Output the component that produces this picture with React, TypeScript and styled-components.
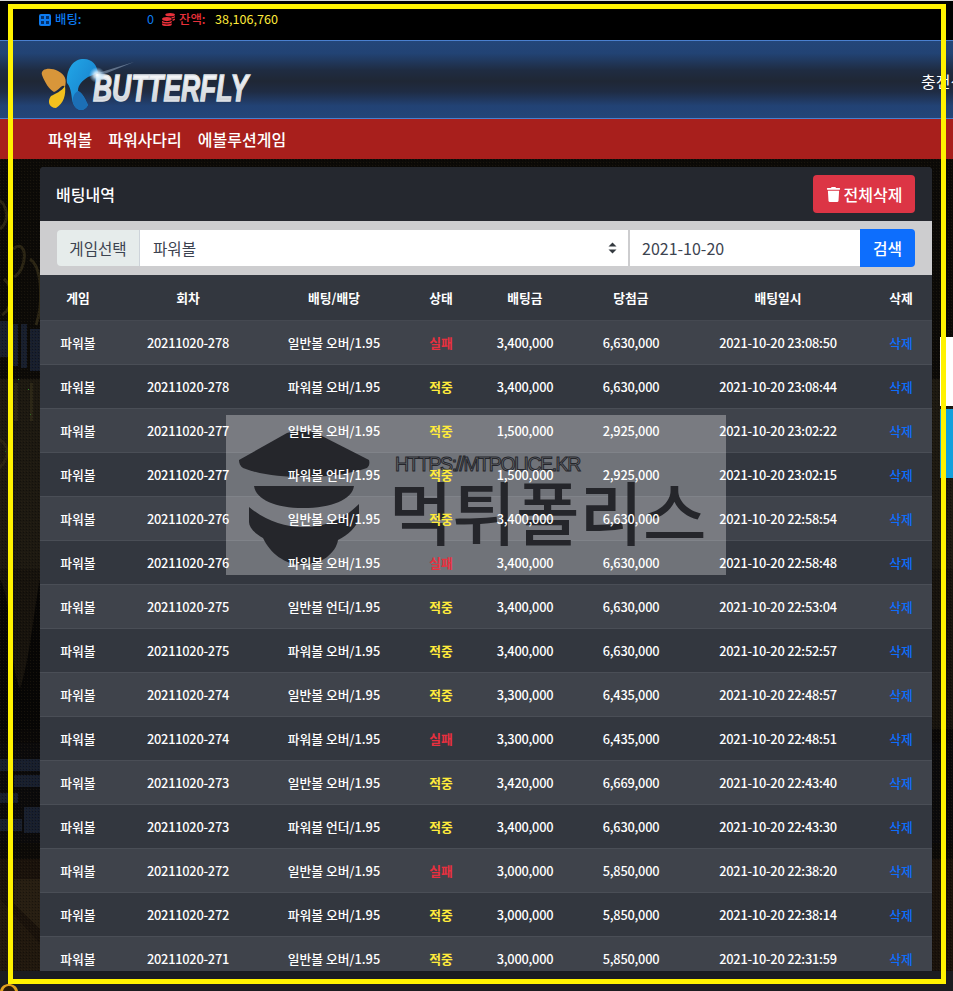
import React from "react";
import styled, { createGlobalStyle } from "styled-components";
import { FaTrash, FaCoins } from "react-icons/fa";

const KR = `"Noto Sans CJK KR", "Noto Sans", sans-serif`;

const Global = createGlobalStyle`
  html, body { margin: 0; padding: 0; background: #000; }
  * { box-sizing: border-box; }
  body { font-family: ${KR}; }
`;

const Page = styled.div`
  position: relative;
  width: 953px;
  height: 991px;
  overflow: hidden;
  display: grid;
  grid-template-rows: 40px 79px 40px 1fr 20px;
  background: #0d0b08;
`;

const TopBar = styled.div`
  position: relative;
  background: #000;
  border-top: 1px solid #d8d8d8;
  padding: 0 0 2px 39px;
  display: flex;
  align-items: center;
  font-size: 12.4px;
  font-weight: 500;
  line-height: 1;
  height: 40px;
`;

const Stat = styled.span<{ $color: string; $width?: number }>`
  color: ${(p) => p.$color};
  display: inline-flex;
  align-items: center;
  gap: 4px;
  white-space: nowrap;
  ${(p) => (p.$width ? `width: ${p.$width}px;` : "")}
`;

const Amount = styled(Stat)`
  font-weight: 400;
  font-size: 12.6px;
`;

const HeaderBar = styled.header`
  position: relative;
  background: linear-gradient(180deg, #234679 0%, #224374 16%, #1f2c42 38%, #1f2735 52%, #1f2c44 66%, #224274 84%, #234679 100%);
  border-top: 1px solid #4a80cf;
  border-bottom: 1px solid #4a80cf;
  display: grid;
  grid-template-columns: 881px max-content;
  align-items: center;
  padding-left: 40px;
`;

const LogoSvg = styled.svg`
  display: block;
  width: 210px;
  height: 60px;
  margin-top: 6px;
  overflow: visible;
`;

const HeadMenu = styled.div`
  color: #fff;
  font-size: 16px;
  white-space: nowrap;
  padding-top: 3px;
`;

const RedNav = styled.nav`
  position: relative;
  background: #a81f1c;
  display: flex;
  align-items: center;
  gap: 16px;
  padding-left: 48px;
  color: #fff;
  font-size: 16px;
  font-weight: 500;
  line-height: 1;
`;

const Main = styled.main`
  position: relative;
  padding: 8px 21px 0 40px;
  overflow: hidden;
  min-height: 0;
`;

const Panel = styled.section`
  width: 892px;
  height: 804px;
  overflow: hidden;
  border-radius: 4px 4px 0 0;
  background: #33373f;
`;

const PanelHead = styled.div`
  height: 54px;
  background: #25282f;
  display: flex;
  align-items: center;
  justify-content: space-between;
  padding: 0 17px 0 16px;
`;

const PanelTitle = styled.h2`
  margin: 0;
  color: #fff;
  font-size: 16px;
  font-weight: 500;
`;

const DangerBtn = styled.button`
  height: 38px;
  width: 102px;
  border: 0;
  border-radius: 4px;
  background: #dc3545;
  color: #fff;
  font: 500 16px ${KR};
  display: flex;
  align-items: center;
  justify-content: center;
  gap: 3px;
  padding: 0;
`;

const FilterBar = styled.form`
  height: 54px;
  margin: 0;
  background: #cdcdcf;
  padding: 8px 17px 0;
  display: flex;
  align-items: flex-start;
`;

const FilterLabel = styled.span`
  width: 83px;
  height: 36px;
  margin-top: 1px;
  background: #e6eceb;
  border-radius: 4px 0 0 4px;
  border-right: 1px solid #ced4da;
  color: #3c4350;
  font-size: 15.6px;
  display: flex;
  align-items: center;
  justify-content: center;
`;

const SelectWrap = styled.div`
  position: relative;
  width: 488px;
  height: 36px;
  margin-top: 1px;
  background: #fff;
  color: #3c4350;
  font-size: 15.6px;
  display: flex;
  align-items: center;
  padding-left: 13px;
`;

const SelectArrows = styled.svg`
  position: absolute;
  right: 11px;
  top: 12px;
  width: 9px;
  height: 12px;
`;

const DateInput = styled.input`
  width: 230px;
  height: 36px;
  margin: 1px 0 0 2px;
  padding: 0 12px;
  border: 0;
  outline: 0;
  background: #fff;
  color: #3c4350;
  font: 400 16px ${KR};
`;

const SearchBtn = styled.button`
  width: 55px;
  height: 38px;
  border: 0;
  padding: 0;
  border-radius: 0 4px 4px 0;
  background: #0d6efd;
  color: #fff;
  font: 500 15.8px ${KR};
`;

const Table = styled.table`
  width: 892px;
  table-layout: fixed;
  border-collapse: collapse;
  color: #fff;
  font-size: 12.8px;
`;

const HeadCell = styled.th`
  position: relative;
  z-index: 3;
  height: 45px;
  padding: 0;
  background: #33373f;
  border-bottom: 1px solid #454951;
  font-weight: 700;
  font-size: 12.8px;
  text-align: center;
`;

const Row = styled.tr<{ $odd: boolean }>`
  background: ${(p) => (p.$odd ? "#3f434b" : "#33373f")};
`;

const Cell = styled.td`
  position: relative;
  z-index: 3;
  height: 44px;
  padding: 0;
  border-bottom: 1px solid #4a4e56;
  font-weight: 500;
  text-align: center;
  white-space: nowrap;
`;

const NumCell = styled(Cell)`
  letter-spacing: -0.22px;
`;

const StatusCell = styled(Cell)<{ $win: boolean }>`
  color: ${(p) => (p.$win ? "#ffeb3b" : "#e8303f")};
  font-weight: 700;
`;

const DeleteCell = styled(Cell)`
  color: #0d6efd;
`;

const FootStrip = styled.div`
  position: relative;
  background: #1b1c20;
`;

const Backdrop = styled.svg`
  position: absolute;
  left: 0;
  top: 159px;
  width: 953px;
  height: 812px;
  pointer-events: none;
`;

const Frame = styled.div`
  position: absolute;
  left: 8px;
  top: 4px;
  width: 938px;
  height: 980px;
  border: 5px solid #fff200;
  pointer-events: none;
  z-index: 5;
`;

const SideTab = styled.div<{ $color: string; $top: number; $height: number }>`
  position: absolute;
  left: 940px;
  width: 13px;
  top: ${(p) => p.$top}px;
  height: ${(p) => p.$height}px;
  background: ${(p) => p.$color};
  z-index: 1;
`;

const Badge = styled.svg`
  position: absolute;
  left: 0;
  top: 984px;
  width: 18px;
  height: 7px;
  z-index: 6;
`;

const Watermark = styled.aside`
  position: absolute;
  left: 226px;
  top: 415px;
  width: 500px;
  height: 160px;
  background: rgba(255, 255, 255, 0.3);
  z-index: 2;
  display: flex;
  pointer-events: none;
`;

const Hat = styled.svg`
  width: 157px;
  height: 160px;
  flex: none;
`;

const WmText = styled.div`
  padding: 37px 0 0 12px;
  color: #25262b;
  display: flex;
  flex-direction: column;
`;

const WmUrl = styled.span`
  font: 400 19.5px "Liberation Sans", sans-serif;
  line-height: 24px;
  letter-spacing: -1.45px;
  color: #6f7277;
  -webkit-text-stroke: 1px #25262b;
`;

const WmName = styled.span`
  font: 500 69px ${KR};
  line-height: 76px;
  margin: -4px 0 0 -6px;
  white-space: nowrap;
`;

const COLS = [76, 144, 148, 66, 102, 110, 184, 62];
const HEADS = ["게임", "회차", "배팅/배당", "상태", "배팅금", "당첨금", "배팅일시", "삭제"];

type Bet = [string, string, boolean, string, string, string];
const BETS: Bet[] = [
  ["20211020-278", "일반볼 오버/1.95", false, "3,400,000", "6,630,000", "2021-10-20 23:08:50"],
  ["20211020-278", "파워볼 오버/1.95", true, "3,400,000", "6,630,000", "2021-10-20 23:08:44"],
  ["20211020-277", "일반볼 오버/1.95", true, "1,500,000", "2,925,000", "2021-10-20 23:02:22"],
  ["20211020-277", "파워볼 언더/1.95", true, "1,500,000", "2,925,000", "2021-10-20 23:02:15"],
  ["20211020-276", "일반볼 오버/1.95", true, "3,400,000", "6,630,000", "2021-10-20 22:58:54"],
  ["20211020-276", "파워볼 오버/1.95", false, "3,400,000", "6,630,000", "2021-10-20 22:58:48"],
  ["20211020-275", "일반볼 언더/1.95", true, "3,400,000", "6,630,000", "2021-10-20 22:53:04"],
  ["20211020-275", "파워볼 오버/1.95", true, "3,400,000", "6,630,000", "2021-10-20 22:52:57"],
  ["20211020-274", "일반볼 오버/1.95", true, "3,300,000", "6,435,000", "2021-10-20 22:48:57"],
  ["20211020-274", "파워볼 오버/1.95", false, "3,300,000", "6,435,000", "2021-10-20 22:48:51"],
  ["20211020-273", "일반볼 오버/1.95", true, "3,420,000", "6,669,000", "2021-10-20 22:43:40"],
  ["20211020-273", "파워볼 언더/1.95", true, "3,400,000", "6,630,000", "2021-10-20 22:43:30"],
  ["20211020-272", "일반볼 오버/1.95", false, "3,000,000", "5,850,000", "2021-10-20 22:38:20"],
  ["20211020-272", "파워볼 오버/1.95", true, "3,000,000", "5,850,000", "2021-10-20 22:38:14"],
  ["20211020-271", "일반볼 오버/1.95", true, "3,000,000", "5,850,000", "2021-10-20 22:31:59"],
];

function Logo() {
  return (
    <LogoSvg viewBox="0 0 210 60">
      <defs>
        <linearGradient id="wingBlue" x1="0" y1="0" x2="1" y2="1">
          <stop offset="0" stopColor="#22a7e8" />
          <stop offset="1" stopColor="#1577c4" />
        </linearGradient>
        <linearGradient id="letters" x1="0" y1="0" x2="0" y2="1">
          <stop offset="0" stopColor="#ffffff" />
          <stop offset="1" stopColor="#c4c8cf" />
        </linearGradient>
        <radialGradient id="flare">
          <stop offset="0" stopColor="#ffffff" />
          <stop offset="0.4" stopColor="#d8f0ff" stopOpacity="0.8" />
          <stop offset="1" stopColor="#8fd0ff" stopOpacity="0" />
        </radialGradient>
      </defs>
      <path d="M2 22C0 15 11 14 18 18C25 22 27 26 25 34C22 30 20 37 14 39C9 36 5 30 2 22Z" fill="#d8963a" />
      <path d="M25 33C26 42 24 50 16 55C9 55 7 48 11 43C15 41 22 38 25 33Z" fill="#f2c01e" />
      <path d="M42 6C52 5 57 12 58 20L48 24C42 28 38 32 38 38C43 40 46 48 48 52C44 60 36 58 33 50C31 44 32 36 27 30C26 18 32 7 42 6Z" fill="url(#wingBlue)" />
      <path d="M38 38C43 40 46 48 48 52C44 60 36 58 33 50C32 45 34 40 38 38Z" fill="#1c6fb6" />
      <path d="M58 20L94 9L62 22Z" fill="#9fb4cc" opacity="0.5" />
      <text
        x="53"
        y="48"
        textLength="155"
        lengthAdjust="spacingAndGlyphs"
        fontFamily="Liberation Sans, sans-serif"
        fontWeight="700"
        fontStyle="italic"
        fontSize="36"
        fill="url(#letters)"
        stroke="#dfe3e8"
        strokeWidth="1.3"
      >
        BUTTERFLY
      </text>
      <circle cx="57" cy="22" r="8" fill="url(#flare)" />
    </LogoSvg>
  );
}

function Art() {
  return (
    <Backdrop viewBox="0 0 953 812" preserveAspectRatio="none">
      <defs>
        <pattern id="grain" width="3" height="3" patternUnits="userSpaceOnUse">
          <rect width="1" height="1" fill="#3a2f1c" opacity="0.3" />
          <rect x="2" y="1" width="1" height="1" fill="#000" opacity="0.35" />
        </pattern>
      </defs>
      <rect width="953" height="812" fill="#0c0a07" />
      <rect y="220" width="953" height="190" fill="#1d1911" />
      <rect y="410" width="953" height="160" fill="#17130d" />
      <path d="M0 420C14 450 8 500 20 530C30 500 34 450 40 420V570H0Z" fill="#070605" />
      <rect y="570" width="953" height="14" fill="#0a0807" />
      <rect y="584" width="953" height="100" fill="#0b0a0b" />
      <rect y="700" width="953" height="112" fill="#1a120b" />
      <g fill="none" stroke="#2c2615" strokeWidth="3">
        <path d="M-4 40C8 44 10 62 0 70" />
        <path d="M13 90C28 78 28 110 14 118" />
        <path d="M30 100C44 110 42 150 36 166" />
        <path d="M4 120C16 130 12 150 2 156" />
        <path d="M-2 280C10 285 10 300 -2 310" />
      </g>
      <g fill="#2c2717">
        <rect x="14" y="224" width="4" height="38" />
        <rect x="30" y="224" width="3" height="38" />
      </g>
      <g fill="#181f2e">
        <rect x="0" y="162" width="9" height="36" />
        <rect x="13" y="165" width="5" height="42" />
        <rect x="21" y="165" width="6" height="44" />
        <rect x="30" y="170" width="10" height="42" />
        <rect x="0" y="600" width="40" height="12" />
        <rect x="14" y="616" width="26" height="12" />
        <rect x="0" y="634" width="18" height="10" />
        <rect x="24" y="648" width="16" height="26" />
        <rect x="0" y="660" width="22" height="12" />
      </g>
      <path d="M0 740L40 785V812H0Z" fill="#21180e" />
      <path d="M14 720H40V770L14 745Z" fill="#271e12" />
      <g fill="#2e8a2a">
        <rect x="18" y="220" width="1" height="1" />
        <rect x="28" y="230" width="1" height="1" />
        <rect x="30" y="255" width="1" height="1" />
        <rect x="5" y="292" width="1" height="1" />
      </g>
      <rect width="953" height="812" fill="url(#grain)" />
    </Backdrop>
  );
}

function CalcIcon() {
  return (
    <svg width="12" height="12" viewBox="0 0 12 12">
      <rect width="12" height="12" rx="2" fill="#0d7bf0" />
      <path d="M2 2H5V5H2ZM7 2H10V5H7ZM2 7H5V10H2ZM7 7H10V10H7Z" fill="#04306b" />
    </svg>
  );
}

export default function App() {
  return (
    <Page>
      <Global />
      <Art />
      <TopBar>
        <Stat $color="#0d7bf0" $width={108}>
          <CalcIcon />
          배팅:
        </Stat>
        <Amount $color="#0d7bf0" $width={15}>0</Amount>
        <Stat $color="#e8303a" $width={53}>
          <FaCoins size={13} />
          잔액:
        </Stat>
        <Amount $color="#ffeb3b">38,106,760</Amount>
      </TopBar>
      <HeaderBar>
        <Logo />
        <HeadMenu>충전신청</HeadMenu>
      </HeaderBar>
      <RedNav>
        <span>파워볼</span>
        <span>파워사다리</span>
        <span>에볼루션게임</span>
      </RedNav>
      <Main>
        <Panel>
          <PanelHead>
            <PanelTitle>배팅내역</PanelTitle>
            <DangerBtn type="button">
              <FaTrash size={15} />
              전체삭제
            </DangerBtn>
          </PanelHead>
          <FilterBar>
            <FilterLabel>게임선택</FilterLabel>
            <SelectWrap>
              파워볼
              <SelectArrows viewBox="0 0 9 12">
                <path d="M4.5 0.5L8.5 4.5H0.5Z M4.5 11.5L0.5 7.5H8.5Z" fill="#343a40" />
              </SelectArrows>
            </SelectWrap>
            <DateInput readOnly value="2021-10-20" />
            <SearchBtn type="button">검색</SearchBtn>
          </FilterBar>
          <Table>
            <colgroup>
              {COLS.map((w, i) => (
                <col key={i} width={w} />
              ))}
            </colgroup>
            <thead>
              <tr>
                {HEADS.map((h) => (
                  <HeadCell key={h}>{h}</HeadCell>
                ))}
              </tr>
            </thead>
            <tbody>
              {BETS.map((b, i) => (
                <Row key={i} $odd={i % 2 === 0}>
                  <Cell>파워볼</Cell>
                  <NumCell>{b[0]}</NumCell>
                  <Cell>{b[1]}</Cell>
                  <StatusCell $win={b[2]}>{b[2] ? "적중" : "실패"}</StatusCell>
                  <NumCell>{b[3]}</NumCell>
                  <NumCell>{b[4]}</NumCell>
                  <NumCell>{b[5]}</NumCell>
                  <DeleteCell>삭제</DeleteCell>
                </Row>
              ))}
            </tbody>
          </Table>
        </Panel>
      </Main>
      <FootStrip />
      <SideTab $color="#ffffff" $top={337} $height={69} />
      <SideTab $color="#13a0dc" $top={409} $height={69} />
      <Watermark>
        <Hat viewBox="0 0 157 160">
          <g fill="#25262b">
            <path d="M13 45L61 18C70 15 82 15 90 18L143 45C144 49 143 51 141 53C120 60 100 62 77 62C55 62 35 60 17 53C14 51 13 48 13 45Z" />
            <path d="M28 71H128C126 85 105 93 77 93C50 93 30 85 28 71Z" />
            <path d="M23 92C40 106 58 112 77 112C100 112 118 104 133 89V103C131 112 122 120 112 125C110 138 95 150 77 150C59 150 44 138 37 123C28 118 23 112 23 107Z" />
          </g>
        </Hat>
        <WmText>
          <WmUrl>HTTPS://MTPOLICE.KR</WmUrl>
          <WmName>먹튀폴리스</WmName>
        </WmText>
      </Watermark>
      <Frame />
      <Badge viewBox="0 0 18 7">
        <path d="M0 7C1 1 6 0 9 0C13 0 17 2 18 7Z" fill="#e0a020" />
        <path d="M3 7C4 3 7 2 9 2C12 2 14 4 15 7Z" fill="#2a1a08" />
      </Badge>
    </Page>
  );
}
